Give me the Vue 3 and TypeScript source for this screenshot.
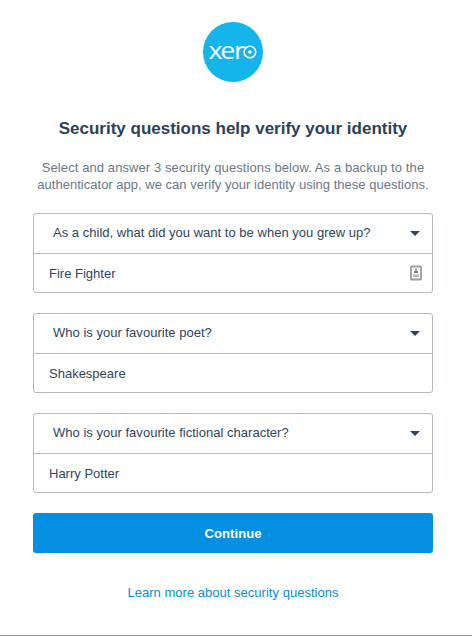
<script setup lang="ts">
import { ref } from 'vue'

interface SecurityQuestion {
  question: string
  answer: string
  hasManagerIcon: boolean
}

const questions = ref<SecurityQuestion[]>([
  { question: 'As a child, what did you want to be when you grew up?', answer: 'Fire Fighter', hasManagerIcon: true },
  { question: 'Who is your favourite poet?', answer: 'Shakespeare', hasManagerIcon: false },
  { question: 'Who is your favourite fictional character?', answer: 'Harry Potter', hasManagerIcon: false },
])
</script>

<template>
  <main class="page">
    <svg class="logo" viewBox="0 0 60 60" role="img" aria-label="xero">
      <circle cx="30" cy="30" r="30" fill="#13b5ea" />
      <text class="wordmark" transform="scale(1.14 1)" x="4.9 15.2 27.2" y="36.8">xer</text>
      <circle cx="46.9" cy="30" r="5.8" fill="none" stroke="#fff" stroke-width="1.6" />
      <circle cx="46.9" cy="30" r="1.8" fill="#fff" />
    </svg>

    <h1 class="title">Security questions help verify your identity</h1>
    <p class="intro">
      <span class="wide">Select and answer 3 security questions below. As a backup to the</span><br />
      authenticator app, we can verify your identity using these questions.
    </p>

    <form class="form" @submit.prevent>
      <section v-for="item in questions" :key="item.question" class="group">
        <div class="row select">
          <span>{{ item.question }}</span>
          <svg class="caret" viewBox="0 0 10 5"><path d="M0 0H10L5 5Z" fill="#2e4560" /></svg>
        </div>
        <div class="row answer">
          <span>{{ item.answer }}</span>
          <svg v-if="item.hasManagerIcon" class="manager" viewBox="0 0 12 16">
            <rect x="1" y="1.5" width="10" height="13" rx="0.6" fill="#fff" stroke="#9c9c9c" stroke-width="1.8" />
            <path d="M5.3 3.5H6.7V6H8V8H4V6H5.3Z" fill="#858585" />
            <path d="M3 9.5H9V12H3Z" fill="#b8b8b8" />
          </svg>
        </div>
      </section>
      <button class="submit" type="submit">Continue</button>
    </form>

    <a class="link">Learn more about security questions</a>
  </main>
</template>

<style>
body {
  background: #fff;
}
</style>

<style scoped>
.page {
  box-sizing: border-box;
  width: 472px;
  height: 636px;
  padding: 22px 39px 0 33px;
  display: flex;
  flex-direction: column;
  align-items: center;
  border-bottom: 1px solid #929292;
  font-family: "Liberation Sans", Arial, sans-serif;
  font-size: 13px;
  color: #2e4560;
}
.logo {
  width: 60px;
  height: 60px;
  flex: none;
}
.wordmark {
  font-family: "Open Sans", sans-serif;
  font-size: 23.5px;
  font-weight: 400;
  fill: #fff;
}
.title {
  margin: 37px 0 0;
  font-size: 17px;
  line-height: 20px;
  font-weight: 700;
  white-space: nowrap;
  color: #2b4258;
}
.intro {
  margin: 20px 0 0;
  line-height: 17px;
  text-align: center;
  white-space: nowrap;
  letter-spacing: 0.015px;
  color: #6b778c;
}
.wide {
  letter-spacing: 0.093px;
}
.form {
  width: 400px;
  margin-top: 20px;
  display: flex;
  flex-direction: column;
  gap: 20px;
}
.group {
  box-sizing: border-box;
  height: 80px;
  border: 1px solid #b1b8c1;
  border-radius: 3px;
}
.row {
  box-sizing: border-box;
  display: flex;
  align-items: center;
  justify-content: space-between;
}
.select {
  height: 40px;
  padding: 0 12px 2px 19px;
  border-bottom: 1px solid #b1b8c1;
  letter-spacing: 0.02px;
}
.answer {
  height: 38px;
  padding: 0 10px 0 15px;
}
.caret {
  width: 10px;
  height: 5px;
  margin-top: 2px;
}
.manager {
  width: 12px;
  height: 16px;
}
.submit {
  height: 40px;
  padding: 0;
  border: 0;
  border-radius: 3px;
  background: #048fe0;
  color: #fff;
  font: inherit;
  font-weight: 700;
  letter-spacing: 0.1px;
}
.link {
  margin-top: 32px;
  line-height: 16px;
  letter-spacing: 0.02px;
  color: #048fe0;
}
</style>
